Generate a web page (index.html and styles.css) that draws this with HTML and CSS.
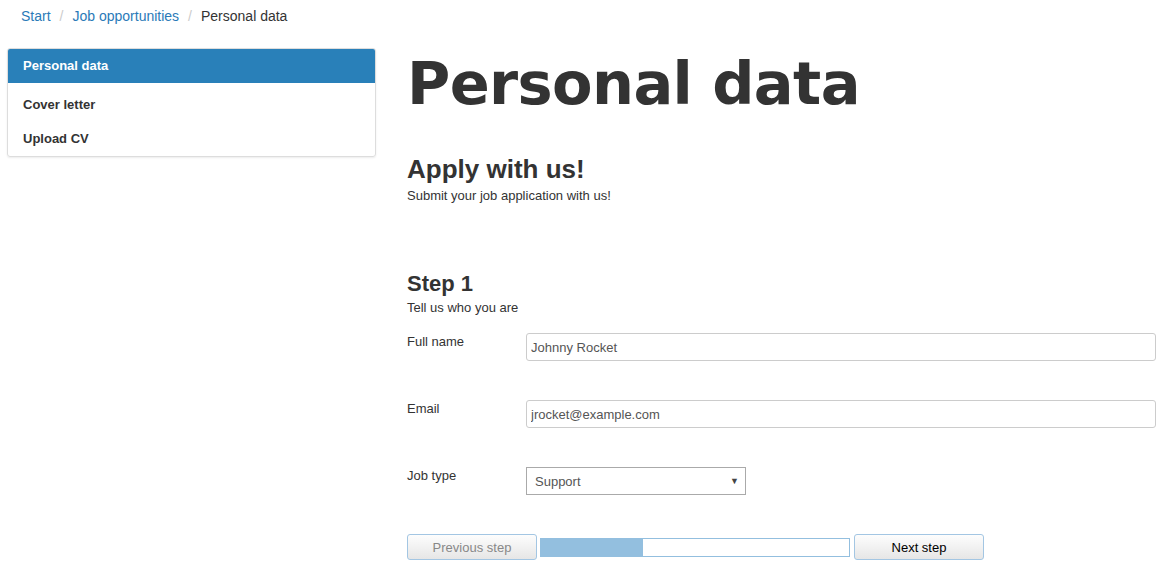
FILE: index.html
```html
<!DOCTYPE html>
<html lang="en">
<head>
    <meta charset="UTF-8">
    <meta name="viewport" content="width=device-width, initial-scale=1.0">
    <link rel="stylesheet" href="styles.css">
    <title>Personal data</title>
</head>
<body>
    <ol class="breadcrumb">
        <li><a href="#">Start</a></li>
        <li><a href="#">Job opportunities</a></li>
        <li class="current">Personal data</li>
    </ol>
    <div class="page">
        <nav class="steps">
            <div class="steps-active">Personal data</div>
            <ul class="steps-list">
                <li>Cover letter</li>
                <li>Upload CV</li>
            </ul>
        </nav>
        <main class="content">
            <h1>Personal data</h1>
            <h2>Apply with us!</h2>
            <p class="lead">Submit your job application with us!</p>

            <h3>Step 1</h3>
            <p class="lead">Tell us who you are</p>

            <form class="form">
                <div class="form-row">
                    <label for="fullname">Full name</label>
                    <input type="text" id="fullname" class="field" value="Johnny Rocket">
                </div>
                <div class="form-row">
                    <label for="email">Email</label>
                    <input type="text" id="email" class="field" value="jrocket@example.com">
                </div>
                <div class="form-row">
                    <label for="jobtype">Job type</label>
                    <div class="select" id="jobtype">
                        <span>Support</span>
                        <span class="caret">&#9660;</span>
                    </div>
                </div>
                <div class="wizard">
                    <button type="button" class="btn" disabled>Previous step</button>
                    <div class="progress"><div class="progress-bar" style="width: 33%"></div></div>
                    <button type="button" class="btn">Next step</button>
                </div>
            </form>
        </main>
    </div>
</body>
</html>
```

FILE: styles.css
```css
body {
    margin: 0;
    font-family: "Liberation Sans", Arial, sans-serif;
    font-size: 13px;
    color: #333;
    background: #fff;
}

.breadcrumb {
    list-style: none;
    margin: 0;
    padding: 8px 21px 0;
    height: 40px;
    box-sizing: border-box;
    font-size: 14px;
    display: flex;
}

.breadcrumb li + li::before {
    content: "/";
    color: #ccc;
    padding: 0 9px;
}

.breadcrumb a {
    color: #2a7ab8;
    text-decoration: none;
}

.breadcrumb .current {
    color: #333;
}

.page {
    display: flex;
    padding: 8px 9px 0 7px;
    gap: 31px;
}

.steps {
    width: 367px;
    flex: none;
    align-self: flex-start;
    border: 1px solid #ddd;
    border-radius: 3px;
    box-shadow: 0 1px 2px rgba(0, 0, 0, 0.08);
    font-weight: bold;
    overflow: hidden;
}

.steps-active {
    background: #2980b9;
    color: #fff;
    height: 34px;
    line-height: 34px;
    padding: 0 15px;
}

.steps-list {
    list-style: none;
    margin: 0;
    padding: 5px 0 0;
}

.steps-list li {
    height: 34px;
    line-height: 34px;
    padding: 0 15px;
}

.content {
    flex: 1;
}

h1 {
    font-family: "DejaVu Sans", Verdana, sans-serif;
    font-size: 59px;
    letter-spacing: -0.6px;
    line-height: 70px;
    margin: 1px 0 35px;
}

h2 {
    font-size: 26px;
    line-height: 30px;
    margin: 0 0 4px;
}

h3 {
    font-size: 22px;
    line-height: 26px;
    margin: 67px 0 3px;
}

.lead {
    margin: 0;
    line-height: 16px;
}

.form {
    margin-top: 17px;
}

.form-row {
    display: flex;
    height: 28px;
    margin-bottom: 39px;
}

.form-row label {
    width: 119px;
    flex: none;
    padding-top: 1px;
}

.field {
    flex: 1;
    height: 28px;
    box-sizing: border-box;
    border: 1px solid #ccc;
    border-radius: 3px;
    padding: 0 4px;
    font: 13px "Liberation Sans", Arial, sans-serif;
    color: #555;
}

.select {
    width: 220px;
    height: 28px;
    box-sizing: border-box;
    border: 1px solid #aaa;
    display: flex;
    align-items: center;
    justify-content: space-between;
    padding: 0 6px 0 8px;
    color: #555;
}

.caret {
    font-size: 9px;
    color: #444;
}

.wizard {
    display: flex;
    align-items: center;
    gap: 3px;
}

.btn {
    width: 130px;
    height: 26px;
    border: 1px solid #a3c6e3;
    border-radius: 3px;
    background: linear-gradient(#fdfdfd, #e6e6e6);
    font: 13px "Liberation Sans", Arial, sans-serif;
    color: #000;
}

.btn:disabled {
    color: #888;
}

.progress {
    width: 308px;
    height: 17px;
    margin-right: 1px;
    border: 1px solid #93bfdf;
    background: #fff;
}

.progress-bar {
    height: 100%;
    background: #93bfdf;
}
```
